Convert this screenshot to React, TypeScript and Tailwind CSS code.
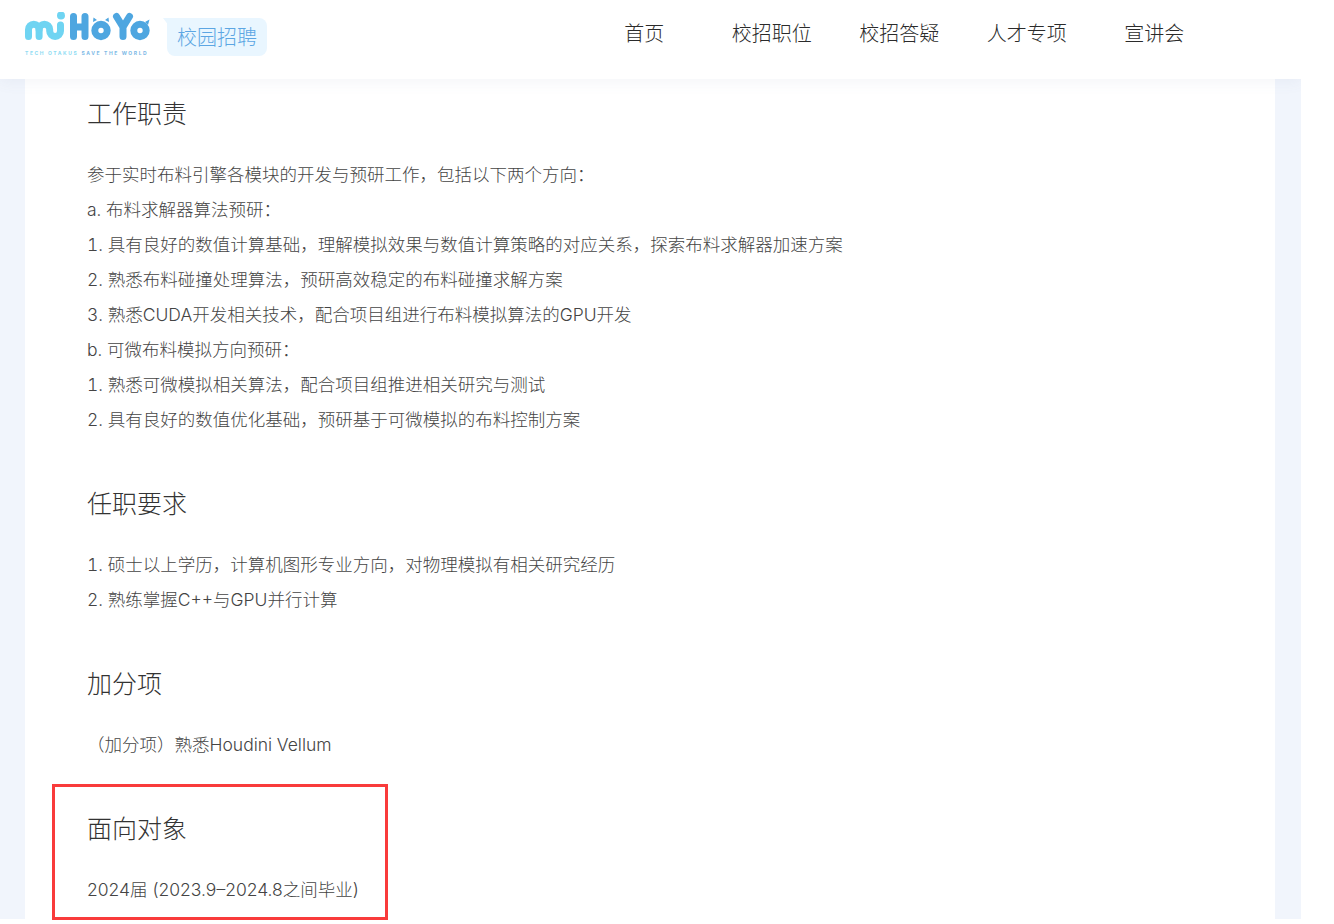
const font = "[font-family:Inter,'Noto_Sans_CJK_SC',sans-serif]";

const navItems = ["首页", "校招职位", "校招答疑", "人才专项", "宣讲会"];

const sections = [
  {
    title: "工作职责",
    lines: [
      "参于实时布料引擎各模块的开发与预研工作，包括以下两个方向：",
      "a. 布料求解器算法预研：",
      "1. 具有良好的数值计算基础，理解模拟效果与数值计算策略的对应关系，探索布料求解器加速方案",
      "2. 熟悉布料碰撞处理算法，预研高效稳定的布料碰撞求解方案",
      "3. 熟悉CUDA开发相关技术，配合项目组进行布料模拟算法的GPU开发",
      "b. 可微布料模拟方向预研：",
      "1. 熟悉可微模拟相关算法，配合项目组推进相关研究与测试",
      "2. 具有良好的数值优化基础，预研基于可微模拟的布料控制方案",
    ],
  },
  {
    title: "任职要求",
    lines: [
      "1. 硕士以上学历，计算机图形专业方向，对物理模拟有相关研究经历",
      "2. 熟练掌握C++与GPU并行计算",
    ],
  },
  {
    title: "加分项",
    lines: ["（加分项）熟悉Houdini Vellum"],
  },
];

const Logo = () => (
  <div className="flex flex-col w-[125px]">
    <svg width="125" height="36" viewBox="25 12 125 36" fill="none" strokeLinecap="round" strokeWidth="7">
      <g stroke="#6fd4f2">
        <path d="M28.500 36.500 V29.500 a5.300 5.300 0 0 1 10.600 0 V36.500" />
        <path d="M39.100 29.500 a5.300 5.300 0 0 1 10.600 0 V31 a5.400 5.500 0 0 0 10.800 0 V25" />
      </g>
      <circle cx="61" cy="15.500" r="4" fill="#6fd4f2" />
      <g stroke="#4ea6e0">
        <path d="M73.500 16.500 V36.500 M85 16.500 V36.500 M73.500 27 H85" />
        <circle cx="101" cy="30.500" r="6.200" />
        <path d="M116.500 16.500 L123 27 L129.500 16.500 M123 27 V36.500" />
        <circle cx="140" cy="30.500" r="6.200" />
      </g>
      <path d="M93 22 L93.500 17.500 L97 20 Z M109 22 L108.500 17.500 L105 20 Z" fill="#4ea6e0" />
      <path d="M145 22 L149.500 19.500 L148 25 Z" fill="#4ea6e0" />
    </svg>
    <div className="mt-[2px] flex gap-[3px] text-[5px] leading-[6px] font-bold whitespace-nowrap tracking-[1.6px]">
      <span className="text-[#8fdcf3]">TECH OTAKUS</span>
      <span className="text-[#7db9e6]">SAVE THE WORLD</span>
    </div>
  </div>
);

const Bubble = () => (
  <div className="relative ml-[17px] mt-[6px] flex h-[38px] w-[100px] items-center justify-center rounded-tr-[8px] rounded-br-[8px] rounded-bl-[8px] bg-[#e9f6ff] pt-[1px] text-[20px] font-light text-[#5ca6e3]">
    <span className="absolute left-[-4px] top-0 h-0 w-0 border-t-[8px] border-l-[6px] border-t-[#e9f6ff] border-l-transparent" />
    校园招聘
  </div>
);

const Block = ({ title, lines, plain }: { title: string; lines: string[]; plain?: boolean }) => (
  <section className="pl-[62px]">
    <h2 className="h-[35px] text-[25px] leading-[35px] font-light text-[#333333]">{title}</h2>
    <div className={`mt-[25px] text-[17.5px] leading-[35px] font-light text-[#444444] ${plain ? "" : "tabular-nums"}`}>
      {lines.map((l) => (
        <p key={l} className="h-[35px] whitespace-nowrap">
          {l}
        </p>
      ))}
    </div>
  </section>
);

export default function App() {
  return (
    <div className={`h-[924px] w-[1334px] overflow-hidden bg-white ${font}`}>
      <div className="h-[919px] w-[1301px] overflow-x-clip bg-[#f1f5fc]">
        <header className="relative z-10 flex h-[79px] bg-white pl-[25px] pt-[12px] shadow-[0_3px_14px_rgba(100,120,160,0.07)]">
          <Logo />
          <Bubble />
          <nav className="ml-[313.5px] flex h-[43px] items-center pt-[1px] text-[20px] font-light text-[#2b2b2b]">
            {navItems.map((n) => (
              <a key={n} className="w-[127.5px] text-center">
                {n}
              </a>
            ))}
          </nav>
        </header>
        <main className="ml-[25px] flex h-[840px] w-[1250px] flex-col gap-[50px] bg-white pt-[18px]">
          {sections.map((s) => (
            <Block key={s.title} title={s.title} lines={s.lines} />
          ))}
          <div className="relative">
            <div className="absolute left-[27px] top-[-28px] h-[136px] w-[336px] border-[3px] border-[#f93b3b]" />
            <Block title="面向对象" lines={["2024届 (2023.9–2024.8之间毕业)"]} plain />
          </div>
        </main>
      </div>
    </div>
  );
}
